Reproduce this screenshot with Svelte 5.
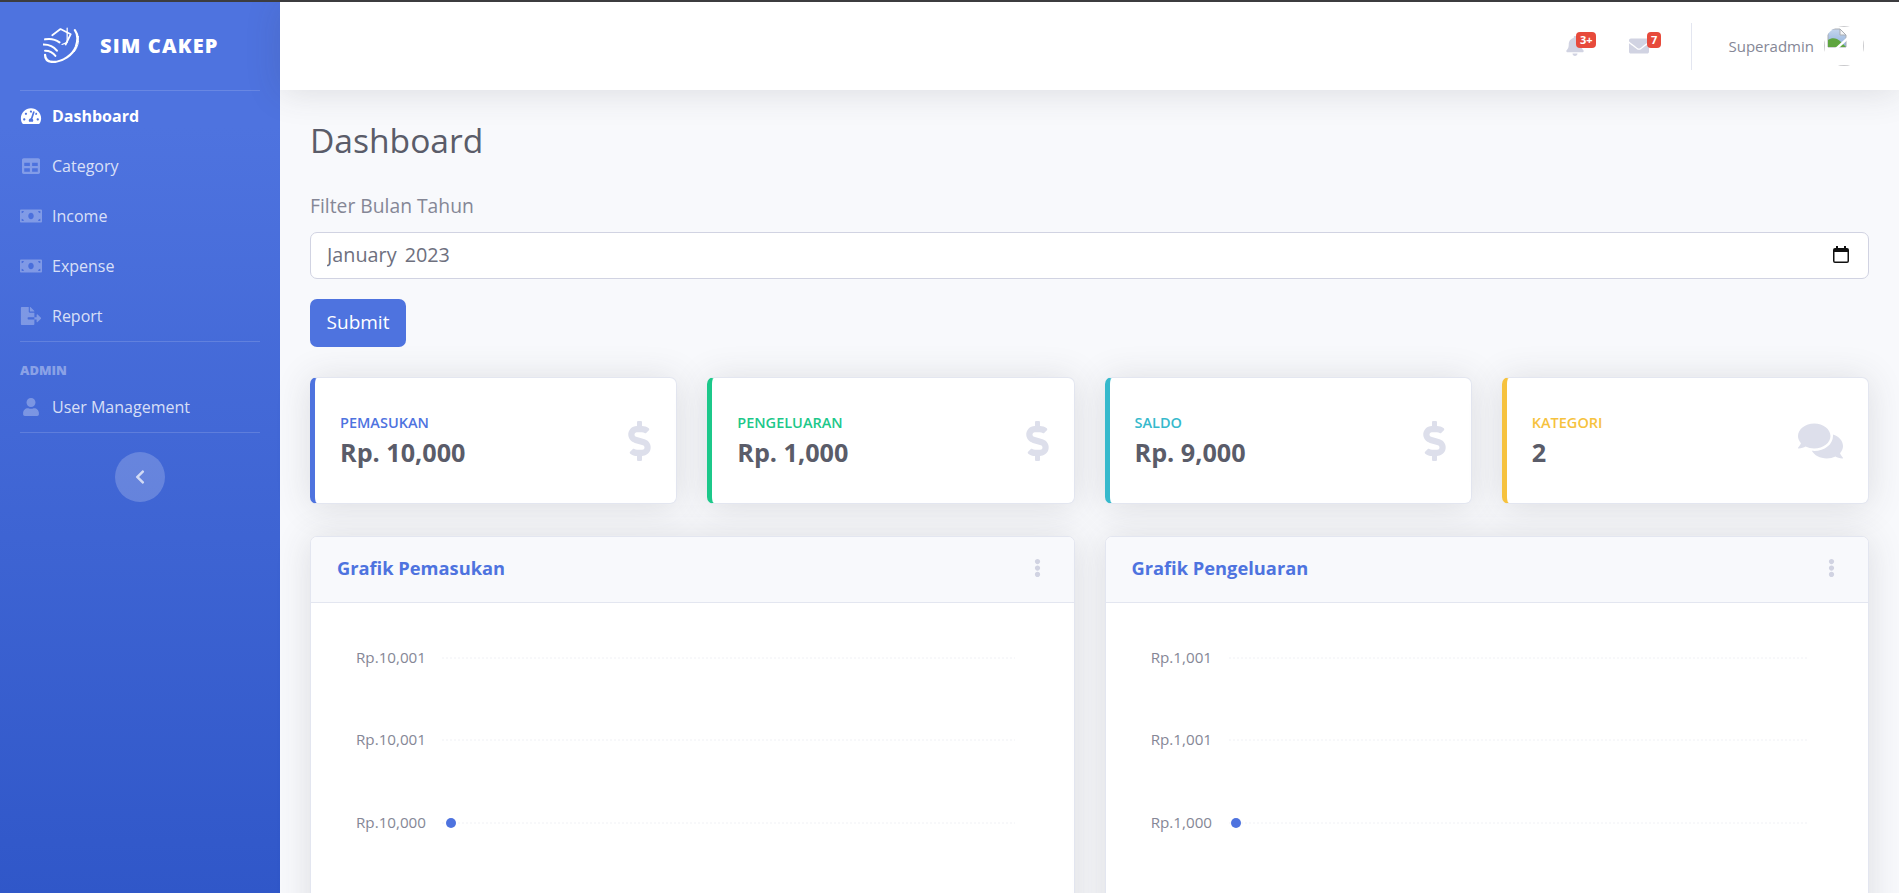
<script>
	const icons = {
		gauge: ['0 0 576 512', 'M288 32C128.94 32 0 160.94 0 320c0 52.8 14.25 102.26 39.06 144.8 5.61 9.62 16.3 15.2 27.44 15.2h443c11.14 0 21.83-5.58 27.44-15.2C561.75 422.26 576 372.8 576 320c0-159.06-128.94-288-288-288zm0 64c14.71 0 26.58 10.13 30.32 23.65-1.11 2.26-2.64 4.23-3.45 6.67l-9.22 27.67c-5.13 3.49-10.97 6.01-17.64 6.01-17.67 0-32-14.33-32-32S270.33 96 288 96zM96 384c-17.67 0-32-14.33-32-32s14.33-32 32-32 32 14.33 32 32-14.33 32-32 32zm48-160c-17.67 0-32-14.33-32-32s14.33-32 32-32 32 14.33 32 32-14.33 32-32 32zm246.77-72.41l-61.33 184C343.13 347.33 352 364.54 352 384c0 11.72-3.38 22.55-8.88 32H232.88c-5.5-9.45-8.88-20.28-8.88-32 0-33.94 26.5-61.43 59.9-63.59l61.34-184.01c4.17-12.56 17.73-19.45 30.36-15.17 12.57 4.19 19.35 17.79 15.17 30.36zm14.66 57.2l15.52-46.55c3.47-1.29 7.13-2.23 11.05-2.23 17.67 0 32 14.33 32 32s-14.33 32-32 32c-11.38-.01-20.89-6.28-26.57-15.22zM480 384c-17.67 0-32-14.33-32-32s14.33-32 32-32 32 14.33 32 32-14.33 32-32 32z'],
		table: ['0 0 512 512', 'M464 32H48C21.49 32 0 53.49 0 80v352c0 26.51 21.49 48 48 48h416c26.51 0 48-21.49 48-48V80c0-26.51-21.49-48-48-48zM224 416H64v-96h160v96zm0-160H64v-96h160v96zm224 160H288v-96h160v96zm0-160H288v-96h160v96z'],
		money: ['0 0 640 512', 'M608 64H32C14.33 64 0 78.33 0 96v320c0 17.67 14.33 32 32 32h576c17.67 0 32-14.33 32-32V96c0-17.67-14.33-32-32-32zM48 400v-64c35.35 0 64 28.65 64 64H48zm0-224v-64h64c0 35.35-28.65 64-64 64zm272 176c-44.19 0-80-42.99-80-96 0-53.02 35.82-96 80-96s80 42.98 80 96c0 53.03-35.83 96-80 96zm272 48h-64c0-35.35 28.65-64 64-64v64zm0-224c-35.35 0-64-28.65-64-64h64v64z'],
		fileExport: ['0 0 576 512', 'M384 121.9c0-6.3-2.5-12.4-7-16.9L279.1 7c-4.5-4.5-10.6-7-17-7H256v128h128zM571 308l-95.7-96.4c-10.1-10.1-27.3-3-27.3 11.3V288h-64v64h64v65.2c0 14.3 17.2 21.4 27.3 11.3L571 332c6.6-6.7 6.6-17.4 0-24zm-379 28v-32c0-8.8 7.2-16 16-16h176V160H248c-13.2 0-24-10.8-24-24V0H24C10.7 0 0 10.7 0 24v464c0 13.3 10.7 24 24 24h336c13.3 0 24-10.7 24-24V352H208c-8.8 0-16-7.2-16-16z'],
		user: ['0 0 448 512', 'M224 256c70.7 0 128-57.3 128-128S294.7 0 224 0 96 57.3 96 128s57.3 128 128 128zm89.6 32h-16.7c-22.2 10.2-46.9 16-72.9 16s-50.6-5.8-72.9-16h-16.7C60.2 288 0 348.2 0 422.4V464c0 26.5 21.5 48 48 48h352c26.5 0 48-21.5 48-48v-41.6c0-74.2-60.2-134.4-134.4-134.4z'],
		chevron: ['0 0 320 512', 'M34.52 239.03L228.87 44.69c9.37-9.37 24.57-9.37 33.94 0l22.67 22.67c9.36 9.36 9.37 24.52.04 33.9L131.49 256l154.02 154.75c9.34 9.38 9.32 24.54-.04 33.9l-22.67 22.67c-9.37 9.37-24.57 9.37-33.94 0L34.52 272.97c-9.37-9.37-9.37-24.57 0-33.94z'],
		bell: ['0 0 448 512', 'M224 512c35.32 0 63.97-28.65 63.97-64H160.03c0 35.35 28.65 64 63.97 64zm215.39-149.71c-19.32-20.76-55.47-51.99-55.47-154.29 0-77.7-54.48-139.9-127.94-155.16V32c0-17.67-14.32-32-31.98-32s-31.98 14.33-31.98 32v20.84C118.56 68.1 64.08 130.3 64.08 208c0 102.3-36.15 133.53-55.47 154.29-6 6.45-8.66 14.16-8.61 21.71.11 16.4 12.98 32 32.1 32h383.8c19.12 0 32-15.6 32.1-32 .05-7.55-2.61-15.27-8.61-21.71z'],
		envelope: ['0 0 512 512', 'M502.3 190.8c3.9-3.1 9.7-.2 9.7 4.7V400c0 26.5-21.5 48-48 48H48c-26.5 0-48-21.5-48-48V195.6c0-5 5.7-7.8 9.7-4.7 22.4 17.4 52.1 39.5 154.1 113.6 21.1 15.4 56.7 47.8 92.2 47.6 35.7.3 72-32.8 92.3-47.6 102-74.1 131.6-96.3 154-113.7zM256 320c23.2.4 56.6-29.2 73.4-41.4 132.7-96.3 142.8-104.7 173.4-128.7 5.8-4.5 9.2-11.5 9.2-18.9v-19c0-26.5-21.5-48-48-48H48C21.5 64 0 85.5 0 112v19c0 7.4 3.4 14.3 9.2 18.9 30.6 23.9 40.7 32.4 173.4 128.7 16.8 12.2 50.2 41.8 73.4 41.4z'],
		dollar: ['0 0 288 512', 'M209.2 233.4l-108-31.6C88.7 198.2 80 186.5 80 173.5c0-16.3 13.2-29.5 29.5-29.5h66.3c12.2 0 24.2 3.7 34.2 10.5 6.1 4.1 14.3 3.1 19.5-2l34.8-34c7.1-6.9 6.1-18.4-1.8-24.5C238 74.8 207.4 64.1 176 64V16c0-8.8-7.2-16-16-16h-32c-8.8 0-16 7.2-16 16v48h-2.5C45.8 64-5.4 118.7.5 183.6c4.2 46.1 39.4 83.6 83.8 96.6l102.5 30c12.5 3.7 21.2 15.3 21.2 28.3 0 16.3-13.2 29.5-29.5 29.5h-66.3C100 368 88 364.3 78 357.5c-6.1-4.1-14.3-3.1-19.5 2l-34.8 34c-7.1 6.9-6.1 18.4 1.8 24.5 24.5 19.2 55.1 29.9 86.5 30v48c0 8.8 7.2 16 16 16h32c8.8 0 16-7.2 16-16v-48.2c46.6-.9 90.3-28.6 105.7-72.7 21.5-61.6-14.6-124.8-72.5-141.7z'],
		comments: ['0 0 576 512', 'M416 192c0-88.4-93.1-160-208-160S0 103.6 0 192c0 34.3 14.1 65.9 38 92-13.4 30.2-35.5 54.2-35.8 54.5-2.2 2.3-2.8 5.7-1.5 8.7S4.8 352 8 352c36.6 0 66.9-12.3 88.7-25 32.2 15.7 70.3 25 111.3 25 114.9 0 208-71.6 208-160zm122 220c23.9-26 38-57.7 38-92 0-66.9-53.5-124.2-129.3-148.1.9 6.6 1.3 13.3 1.3 20.1 0 105.9-107.7 192-240 192-10.8 0-21.3-.8-31.7-1.9C207.8 439.6 281.8 480 368 480c41 0 79.1-9.2 111.3-25 21.8 12.7 52.1 25 88.7 25 3.2 0 6.1-1.9 7.3-4.8 1.3-2.9.7-6.3-1.5-8.7-.3-.3-22.4-24.2-35.8-54.5z'],
		dots: ['0 0 192 512', 'M96 184c39.8 0 72 32.2 72 72s-32.2 72-72 72-72-32.2-72-72 32.2-72 72-72zM24 80c0 39.8 32.2 72 72 72s72-32.2 72-72S135.8 8 96 8 24 40.2 24 80zm0 352c0 39.8 32.2 72 72 72s72-32.2 72-72-32.2-72-72-72-72 32.2-72 72z']
	};

	const menu = [
		{ label: 'Dashboard', icon: 'gauge', active: true },
		{ label: 'Category', icon: 'table' },
		{ label: 'Income', icon: 'money' },
		{ label: 'Expense', icon: 'money' },
		{ label: 'Report', icon: 'fileExport' }
	];

	const stats = [
		{ label: 'Pemasukan', value: 'Rp. 10,000', tone: 'primary', icon: 'dollar' },
		{ label: 'Pengeluaran', value: 'Rp. 1,000', tone: 'success', icon: 'dollar' },
		{ label: 'Saldo', value: 'Rp. 9,000', tone: 'info', icon: 'dollar' },
		{ label: 'Kategori', value: '2', tone: 'warning', icon: 'comments' }
	];

	const charts = [
		{ title: 'Grafik Pemasukan', ticks: ['Rp.10,001', 'Rp.10,001', 'Rp.10,000'], labelX: 115, lineFrom: 131, lineTo: 704, dotX: 140 },
		{ title: 'Grafik Pengeluaran', ticks: ['Rp.1,001', 'Rp.1,001', 'Rp.1,000'], labelX: 106, lineFrom: 123, lineTo: 702, dotX: 130 }
	];
	const tickY = [55, 137, 220];
</script>

{#snippet icon(name, cls)}
	<svg class="icon {cls}" viewBox={icons[name][0]} aria-hidden="true"><path d={icons[name][1]} /></svg>
{/snippet}

<div class="page">
	<aside class="sidebar">
		<div class="brand">
			<svg class="logo" viewBox="0 0 35 35" fill="none" stroke="#fff" stroke-linecap="round" stroke-linejoin="round">
				<path d="M2 27c0 5 3 7 8 7 9 0 19-7 22-15 2-6 2-12-1-16" stroke-width="2.2" />
				<path d="M34.5 9c1 5-1 11-4 15" stroke-width="0.9" />
				<path d="M2 12c5-1 10 0 14 3M0.5 17c5 0 10 2 13 6M2 23c4 0 8 2 10 5" stroke-width="2" />
				<path d="M9 8l8-6 10 5-5 10" stroke-width="1.7" />
				<path d="M23.5 1v14l-5 2" stroke-width="1.2" />
			</svg>
			<span class="brand-text">SIM CAKEP</span>
		</div>
		<hr />
		<nav>
			{#each menu as item}
				<a href="#top" class="nav-link" class:active={item.active}>
					<span class="nav-icon">{@render icon(item.icon, '')}</span>
					{item.label}
				</a>
			{/each}
		</nav>
		<hr />
		<div class="heading">ADMIN</div>
		<a href="#top" class="nav-link">
			<span class="nav-icon">{@render icon('user', '')}</span>
			User Management
		</a>
		<hr />
		<button class="toggle" aria-label="Toggle sidebar">{@render icon('chevron', '')}</button>
	</aside>

	<div class="main">
		<header class="topbar">
			<div class="alert-item bell">
				{@render icon('bell', '')}
				<span class="badge">3+</span>
			</div>
			<div class="alert-item mail">
				{@render icon('envelope', '')}
				<span class="badge">7</span>
			</div>
			<div class="vr"></div>
			<span class="username">Superadmin</span>
			<div class="avatar">
				<div class="frame"></div>
				<svg class="broken" viewBox="0 0 20 20">
					<defs>
						<linearGradient id="sky" x1="0" y1="0" x2="0" y2="1">
							<stop offset="0" stop-color="#c5d6ee" />
							<stop offset="1" stop-color="#8fb0dc" />
						</linearGradient>
					</defs>
					<path d="M1 1h12l6 6v12H1z" fill="url(#sky)" stroke="#a9adb3" stroke-width="1" />
					<path d="M13 1v6h6z" fill="#f4f5f7" stroke="#a9adb3" stroke-width="1" />
					<path d="M1 19v-7c4-3 9-2 12 1l6 6z" fill="#5fa53f" />
					<path d="M9 21L21 10" stroke="#fff" stroke-width="2.5" />
				</svg>
			</div>
		</header>

		<main class="content">
			<h1>Dashboard</h1>
			<form class="filter" onsubmit={(e) => e.preventDefault()}>
				<label for="bulan">Filter Bulan Tahun</label>
				<div class="date-field">
					<input id="bulan" type="text" value="January 2023" />
					<svg class="calendar" viewBox="0 0 16 17">
						<path d="M3 0h2v2h6V0h2v2h1a2 2 0 0 1 2 2v11a2 2 0 0 1-2 2H2a2 2 0 0 1-2-2V4a2 2 0 0 1 2-2h1zM1.5 6v9a.5.5 0 0 0 .5.5h12a.5.5 0 0 0 .5-.5V6z" />
					</svg>
				</div>
				<button class="submit" type="submit">Submit</button>
			</form>

			<section class="stats">
				{#each stats as s}
					<div class="stat {s.tone}">
						<div class="stat-text">
							<div class="stat-label">{s.label}</div>
							<div class="stat-value">{s.value}</div>
						</div>
						{@render icon(s.icon, 'stat-icon ' + s.icon)}
					</div>
				{/each}
			</section>

			<section class="charts">
				{#each charts as c}
					<div class="card">
						<div class="card-header">
							<h2>{c.title}</h2>
							{@render icon('dots', 'dots')}
						</div>
						<div class="card-body">
							<svg class="chart" width="100%" height="400">
								{#each c.ticks as t, i}
									<text x={c.labelX} y={tickY[i] + 5} text-anchor="end">{t}</text>
									<line x1={c.lineFrom} x2={c.lineTo} y1={tickY[i]} y2={tickY[i]} />
								{/each}
								<circle cx={c.dotX} cy={tickY[2]} r="5" />
							</svg>
						</div>
					</div>
				{/each}
			</section>
		</main>
	</div>
</div>

<style>
	:global(body) {
		margin: 0;
		overflow: hidden;
	}

	.page {
		display: flex;
		height: 893px;
		box-sizing: border-box;
		border-top: 2px solid #3c3c3f;
		background: #f8f9fc;
		font-family: 'Open Sans', 'Noto Sans', sans-serif;
		color: #858796;
		overflow: hidden;
	}

	.icon {
		display: block;
		fill: currentColor;
	}

	.sidebar {
		width: 280px;
		flex: none;
		display: flex;
		flex-direction: column;
		background: linear-gradient(180deg, #4e73df 10%, #224abe 100%) no-repeat;
		background-size: 100% 1250px;
		color: rgba(255, 255, 255, 0.8);
	}

	.brand {
		height: 88px;
		box-sizing: border-box;
		display: flex;
		align-items: center;
		gap: 21px;
		padding: 0 0 2px 43px;
		color: #fff;
	}

	.logo {
		width: 36px;
		height: 36px;
		flex: none;
	}

	.brand-text {
		font-size: 20px;
		font-weight: 800;
		letter-spacing: 1.2px;
	}

	hr {
		width: 240px;
		margin: 0 20px;
		border: 0;
		border-top: 1px solid rgba(255, 255, 255, 0.15);
	}

	nav {
		display: flex;
		flex-direction: column;
	}

	.nav-link {
		height: 50px;
		padding-left: 20px;
		display: flex;
		align-items: center;
		font-size: 16px;
		color: rgba(255, 255, 255, 0.8);
		text-decoration: none;
	}

	.nav-link.active {
		color: #fff;
		font-weight: 700;
	}

	.nav-icon {
		width: 32px;
		flex: none;
		color: rgba(255, 255, 255, 0.3);
	}

	.nav-icon .icon {
		width: 22px;
		height: 18px;
	}

	.active .nav-icon {
		color: #fff;
	}

	.heading {
		height: 21px;
		margin-top: 19px;
		padding-left: 20px;
		font-size: 13px;
		font-weight: 800;
		color: rgba(255, 255, 255, 0.4);
	}

	.toggle {
		width: 50px;
		height: 50px;
		margin: 19px auto 0;
		padding: 0;
		border: 0;
		border-radius: 50%;
		background: rgba(255, 255, 255, 0.2);
		color: rgba(255, 255, 255, 0.7);
		display: flex;
		align-items: center;
		justify-content: center;
	}

	.toggle .icon {
		width: 10px;
		height: 16px;
	}

	.main {
		flex: 1;
		min-width: 0;
		display: flex;
		flex-direction: column;
	}

	.topbar {
		height: 88px;
		flex: none;
		display: flex;
		align-items: center;
		justify-content: flex-end;
		background: #fff;
		box-shadow: 0 2.5px 35px rgba(58, 59, 69, 0.15);
		position: relative;
		z-index: 1;
		padding-right: 35px;
	}

	.alert-item {
		position: relative;
		color: #d1d3e2;
	}

	.alert-item .icon {
		width: 20px;
		height: 20px;
	}

	.bell {
		margin-right: 44px;
	}

	.mail {
		margin-right: 42px;
	}

	.badge {
		position: absolute;
		left: 11px;
		top: -4px;
		background: #e74a3b;
		color: #fff;
		font-size: 11px;
		font-weight: 700;
		line-height: 16px;
		padding: 0 3.5px;
		border-radius: 4px;
	}

	.mail .badge {
		left: 18px;
	}

	.vr {
		width: 1px;
		height: 47px;
		background: #e3e6f0;
		margin-right: 36px;
	}

	.username {
		font-size: 15px;
		margin-right: 10px;
	}

	.avatar {
		width: 40px;
		height: 40px;
		border-radius: 50%;
		position: relative;
		overflow: hidden;
		flex: none;
	}

	.frame {
		position: absolute;
		inset: 0;
		border: 1px solid #c9c9cc;
	}

	.broken {
		position: absolute;
		left: 3px;
		top: 2px;
		width: 20px;
		height: 20px;
	}

	.content {
		flex: 1;
		padding: 0 30px;
	}

	h1 {
		margin: 29px 0 0;
		font-size: 33.6px;
		font-weight: 400;
		line-height: 42px;
		color: #5a5c69;
	}

	.filter {
		display: flex;
		flex-direction: column;
		align-items: flex-start;
		margin-top: 30px;
	}

	label {
		font-size: 19.3px;
		line-height: 30px;
		margin-bottom: 11px;
	}

	.date-field {
		width: 100%;
		height: 47px;
		box-sizing: border-box;
		display: flex;
		align-items: center;
		padding: 0 19px 2px 16px;
		border: 1px solid #d1d3e2;
		border-radius: 7px;
		background: #fff;
	}

	input {
		flex: 1;
		min-width: 0;
		padding: 0;
		border: 0;
		outline: 0;
		background: none;
		color: #6e707e;
		font: inherit;
		font-size: 19.8px;
		word-spacing: 3px;
	}

	.calendar {
		width: 16px;
		height: 17px;
		flex: none;
		fill: #111;
	}

	.submit {
		width: 96px;
		height: 48px;
		margin-top: 20px;
		border: 0;
		border-radius: 7px;
		background: #4e73df;
		color: #fff;
		font: inherit;
		font-size: 19px;
		padding: 0 0 2px;
	}

	.stats {
		display: grid;
		grid-template-columns: repeat(4, 1fr);
		gap: 30px;
		margin-top: 30px;
	}

	.stat {
		height: 127px;
		box-sizing: border-box;
		display: flex;
		align-items: center;
		justify-content: space-between;
		padding: 0 24px 0 25px;
		background: #fff;
		border: 1px solid #e3e6f0;
		border-left: 5px solid;
		border-radius: 7px;
		box-shadow: 0 2.5px 35px rgba(58, 59, 69, 0.15);
	}

	.primary {
		border-left-color: #4e73df;
	}

	.success {
		border-left-color: #1cc88a;
	}

	.info {
		border-left-color: #36b9cc;
	}

	.warning {
		border-left-color: #f6c23e;
	}

	.stat-label {
		font-size: 14.5px;
		font-weight: 600;
		text-transform: uppercase;
		line-height: 20px;
		margin-bottom: 3px;
	}

	.primary .stat-label {
		color: #4e73df;
	}

	.success .stat-label {
		color: #1cc88a;
	}

	.info .stat-label {
		color: #36b9cc;
	}

	.warning .stat-label {
		color: #f6c23e;
	}

	.stat-value {
		font-size: 25.2px;
		font-weight: 700;
		line-height: 32px;
		color: #5a5c69;
	}

	.stat :global(.stat-icon) {
		color: #dddfeb;
		height: 40px;
		width: 25px;
	}

	.stat :global(.stat-icon.comments) {
		width: 45px;
		margin-right: 1px;
	}

	.charts {
		display: grid;
		grid-template-columns: repeat(2, 1fr);
		gap: 30px;
		margin-top: 32px;
	}

	.card {
		background: #fff;
		border: 1px solid #e3e6f0;
		border-radius: 7px;
		box-shadow: 0 2.5px 35px rgba(58, 59, 69, 0.15);
		overflow: hidden;
	}

	.card-header {
		height: 61px;
		display: flex;
		align-items: center;
		justify-content: space-between;
		padding: 0 33px 4px 26px;
		background: #f8f9fc;
		border-bottom: 1px solid #e3e6f0;
	}

	h2 {
		margin: 0;
		font-size: 18.3px;
		font-weight: 700;
		color: #4e73df;
	}

	.card-header :global(.dots) {
		width: 7px;
		height: 20px;
		color: #d1d3e2;
	}

	.chart {
		display: block;
		font-size: 15.2px;
	}

	.chart text {
		fill: #858796;
	}

	.chart line {
		stroke: #f0f1f5;
		stroke-width: 1;
		stroke-dasharray: 2 2;
	}

	.chart circle {
		fill: #4e73df;
	}
</style>
